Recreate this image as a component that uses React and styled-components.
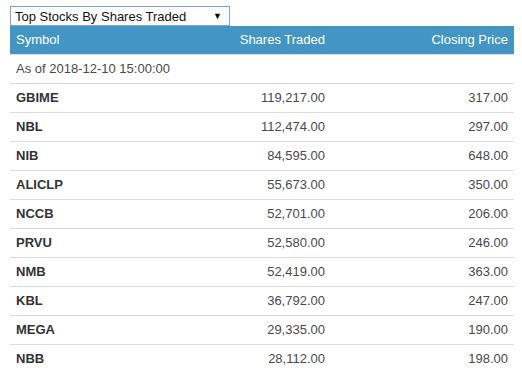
import React from "react";
import styled, { createGlobalStyle } from "styled-components";

const Global = createGlobalStyle`
  body { margin: 0; background: #fff; font-family: "Liberation Sans", Arial, sans-serif; }
`;

const Page = styled.div`
  padding: 6px 8px 0 10px;
  width: 504px;
`;

const Select = styled.div`
  box-sizing: border-box;
  width: 220px;
  height: 20px;
  border: 1px solid #7ba5d6;
  display: flex;
  align-items: center;
  justify-content: space-between;
  padding: 0 7px 0 4px;
  font-size: 13px;
  color: #111;
`;

const Arrow = styled.span`
  font-size: 9px;
  color: #000;
`;

const Table = styled.table`
  width: 504px;
  table-layout: fixed;
  border-collapse: collapse;
  font-size: 13px;
  line-height: 16px;
`;

const HeadCell = styled.th`
  box-sizing: border-box;
  background: #4396c4;
  color: #fff;
  font-weight: normal;
  text-align: ${(p) => (p.$right ? "right" : "left")};
  padding: 6px 6px;
  width: ${(p) => p.$w || "auto"};
`;

const Cell = styled.td`
  border-top: 1px solid #dcdcdc;
  padding: 6px 6px;
  text-align: ${(p) => (p.$right ? "right" : "left")};
  color: ${(p) => (p.$bold ? "#333" : "#4a4a4a")};
  font-weight: ${(p) => (p.$bold ? "bold" : "normal")};
`;

const rows = [
  ["GBIME", "119,217.00", "317.00"],
  ["NBL", "112,474.00", "297.00"],
  ["NIB", "84,595.00", "648.00"],
  ["ALICLP", "55,673.00", "350.00"],
  ["NCCB", "52,701.00", "206.00"],
  ["PRVU", "52,580.00", "246.00"],
  ["NMB", "52,419.00", "363.00"],
  ["KBL", "36,792.00", "247.00"],
  ["MEGA", "29,335.00", "190.00"],
  ["NBB", "28,112.00", "198.00"],
];

export default function App() {
  return (
    <Page>
      <Global />
      <Select>
        <span>Top Stocks By Shares Traded</span>
        <Arrow>▼</Arrow>
      </Select>
      <Table>
        <thead>
          <tr>
            <HeadCell $w="130px">Symbol</HeadCell>
            <HeadCell $right $w="191px">Shares Traded</HeadCell>
            <HeadCell $right>Closing Price</HeadCell>
          </tr>
        </thead>
        <tbody>
          <tr>
            <Cell colSpan={3}>As of 2018-12-10 15:00:00</Cell>
          </tr>
          {rows.map((r) => (
            <tr key={r[0]}>
              <Cell $bold>{r[0]}</Cell>
              <Cell $right>{r[1]}</Cell>
              <Cell $right>{r[2]}</Cell>
            </tr>
          ))}
        </tbody>
      </Table>
    </Page>
  );
}
